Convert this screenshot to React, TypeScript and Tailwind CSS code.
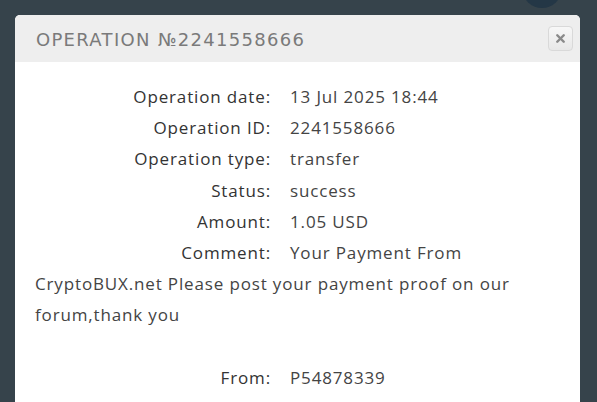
import { X } from 'lucide-react'

const rows: [string, string][] = [
  ['Operation date:', '13 Jul 2025 18:44'],
  ['Operation ID:', '2241558666'],
  ['Operation type:', 'transfer'],
  ['Status:', 'success'],
  ['Amount:', '1.05 USD'],
]

function Row({ label, children }: { label: string; children: React.ReactNode }) {
  return (
    <div>
      <span className="inline-block w-[236px] text-right text-[#333] mr-[19px]">{label}</span>
      <span>{children}</span>
    </div>
  )
}

export default function App() {
  return (
    <div className="relative w-[597px] h-[402px] overflow-hidden bg-[#36434b] font-['Open_Sans',sans-serif]">
      {/* avatar peeking from the page behind */}
      <div className="absolute left-[522px] top-[-32px] w-[40px] h-[40px] rounded-full bg-[#243746]" />

      <div className="absolute left-[15px] top-[15px] w-[565px] h-[420px] bg-white rounded-t-[5px] overflow-hidden">
        <div className="h-[47px] bg-[#eeeeee] flex items-center justify-between pl-[21px] pr-[7px]">
          <h2 className="text-[18px] tracking-[1.3px] text-[#7a7a7a] font-['DejaVu_Sans',sans-serif] font-normal pt-[1px]">
            OPERATION №2241558666
          </h2>
          <button className="w-[25px] h-[25px] rounded-[4px] border border-[#d9d9d9] bg-gradient-to-b from-[#f7f7f7] to-[#e8e8e8] flex items-center justify-center text-[#8a8a8a]">
            <X className="w-[13px] h-[13px]" strokeWidth={4.5} />
          </button>
        </div>

        <div className="px-[20px] pt-[19px] text-[17px] leading-[31.2px] tracking-[0.85px] text-[#444]">
          {rows.map(([label, value]) => (
            <Row key={label} label={label}>
              {value}
            </Row>
          ))}
          <Row label="Comment:">
            Your Payment From CryptoBUX.net Please post your payment proof on our forum,thank you
          </Row>
          <div className="h-[31.2px]" />
          <Row label="From:">P54878339</Row>
        </div>
      </div>
    </div>
  )
}
